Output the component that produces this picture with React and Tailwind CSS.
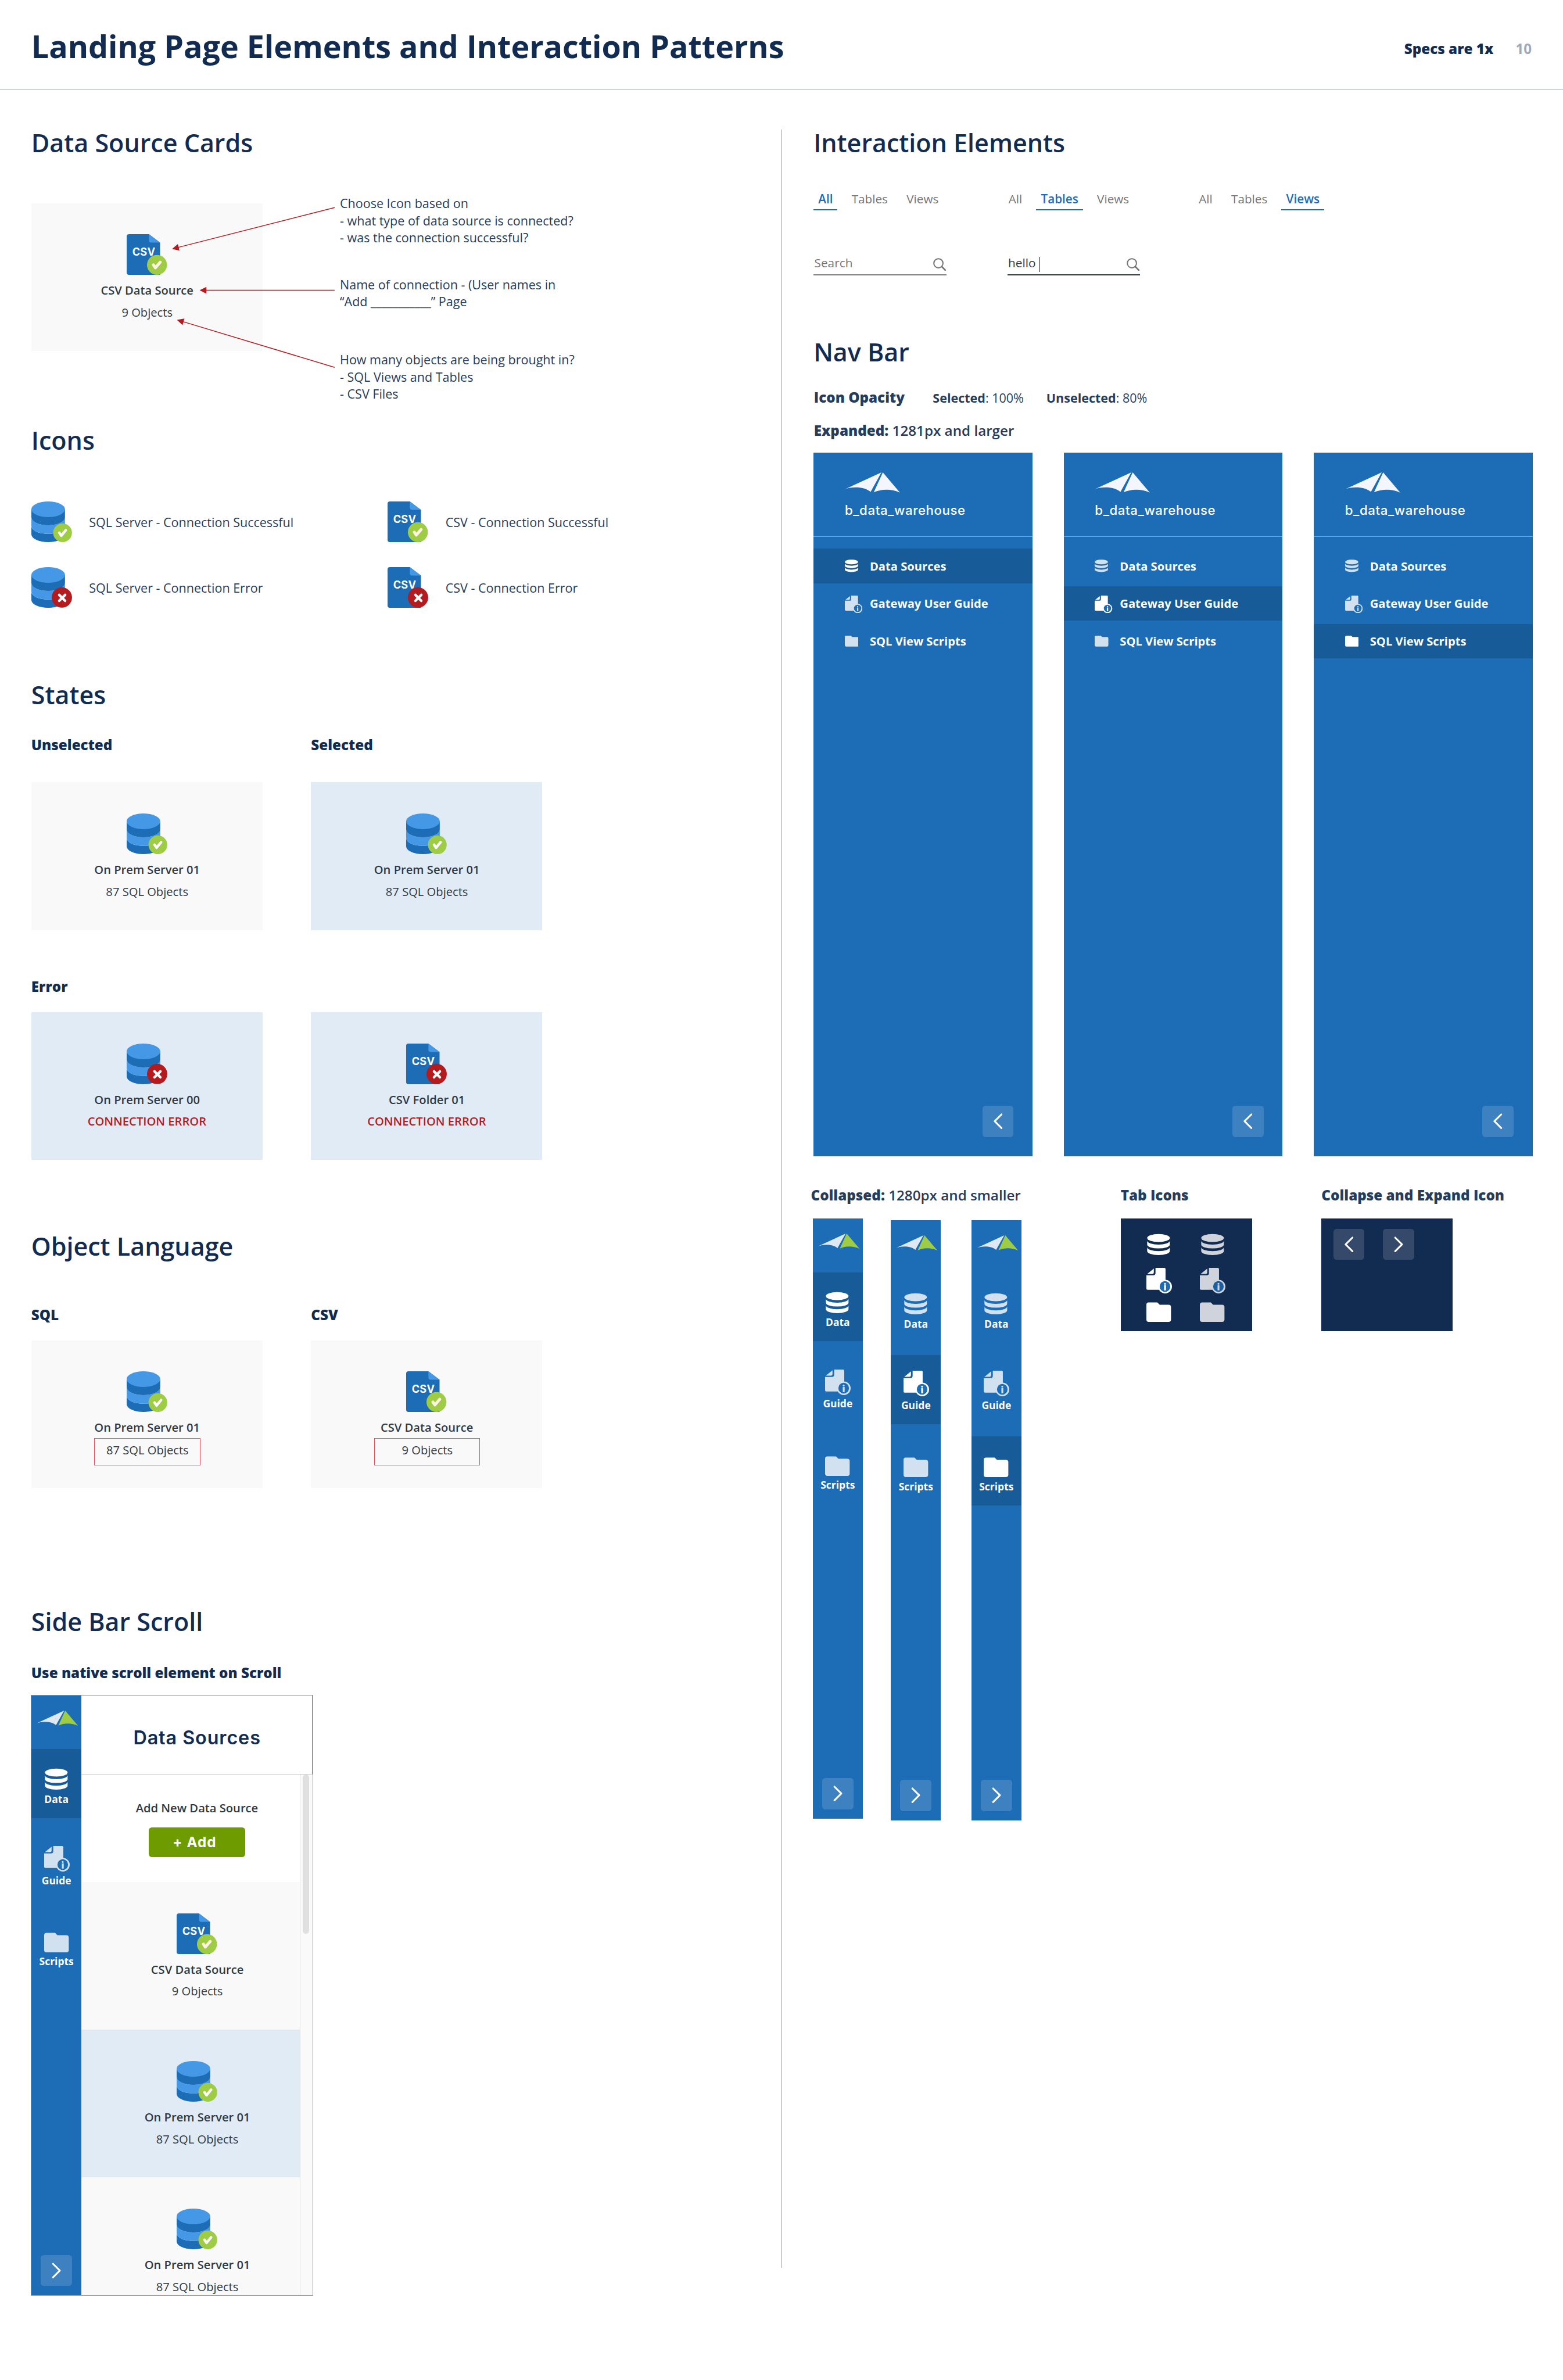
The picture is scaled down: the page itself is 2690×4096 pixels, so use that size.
import React from "react";

/* ---------- status icons ---------- */

function Badge({ error, csv }) {
  if (error) {
    return (
      <g>
        <circle cx="78" cy="77.8" r="26" fill="#b41b1f" />
        <path d="M71.2 71.2 L86.4 86.4 M86.4 71.2 L71.2 86.4" stroke="#fff" strokeWidth="6.4" strokeLinecap="round" />
      </g>
    );
  }
  if (csv) {
    return (
      <g>
        <circle cx="77.6" cy="78.6" r="25.6" fill="#9ecd45" />
        <path d="M68.5 78.5 L73.5 86 L86 71.5" fill="none" stroke="#fff3e4" strokeWidth="7.4" strokeLinecap="round" strokeLinejoin="round" />
      </g>
    );
  }
  return (
    <g>
      <circle cx="79.8" cy="80.2" r="24" fill="#9ecd45" />
      <path d="M71.3 80 L76.6 87.6 L88.2 73.4" fill="none" stroke="#fff" strokeWidth="6.6" strokeLinecap="round" strokeLinejoin="round" />
    </g>
  );
}

function ServerIcon({ error }) {
  return (
    <svg className="h-[105px] w-[104px] shrink-0" viewBox="0 0 104 105">
      <path d="M0 63 A43 20 0 0 0 86 63 V84 A43 20 0 0 1 0 84 Z" fill="#1c6cb6" />
      <path d="M0 41 A43 20 0 0 0 86 41 V63 A43 20 0 0 1 0 63 Z" fill="#4598e6" />
      <path d="M0 20 H86 V41 A43 20 0 0 1 0 41 Z" fill="#1c6cb6" />
      <ellipse cx="43" cy="20" rx="43" ry="20" fill="#4598e6" />
      <Badge error={error} />
    </svg>
  );
}

function CsvIcon({ error }) {
  return (
    <svg className="h-[105px] w-[104px] shrink-0" viewBox="0 0 104 105">
      <path d="M6 0 H57 L85.5 21.5 V104 H6 A6 6 0 0 1 0 98 V6 A6 6 0 0 1 6 0 Z" fill="#1c6cb6" />
      <path d="M57 0 L85.5 21.5 H63 A6 6 0 0 1 57 15.5 Z" fill="#4598e6" />
      <text x="43.8" y="54.8" textAnchor="middle" fill="#fff" className="font-['Inter',sans-serif] text-[27px] font-bold tracking-[0.3px]">
        CSV
      </text>
      <Badge error={error} csv />
    </svg>
  );
}

/* ---------- navigation icons ---------- */

function DbGlyph() {
  return (
    <g fill="#fff">
      <ellipse cx="29" cy="10.2" rx="29" ry="10.2" />
      <path d="M0 17 A29 10 0 0 0 58 17 V27 A29 10 0 0 1 0 27 Z" />
      <path d="M0 34 A29 10 0 0 0 58 34 V44 A29 10 0 0 1 0 44 Z" />
    </g>
  );
}

function GuideGlyph() {
  return (
    <g fill="#fff">
      <path d="M23.3 0 H46 A3 3 0 0 1 49 3 V56 H3 A3 3 0 0 1 0 53 V19 H17.8 A5.5 5.5 0 0 0 23.3 13.5 Z" />
      <path d="M19 2 V12 A3.5 3.5 0 0 1 15.5 15.6 H2 Z" />
      <circle cx="48" cy="48" r="17.4" />
      <circle cx="47.6" cy="47.6" r="13.6" fill="#1c6cb6" />
      <circle cx="47.6" cy="40.8" r="2.4" />
      <rect x="45.3" y="44.4" width="4.8" height="13.3" />
    </g>
  );
}

function FolderGlyph() {
  return (
    <path
      d="M6 0 H28 L34 6 H57 A6 6 0 0 1 63 12 V44 A6 6 0 0 1 57 50 H6 A6 6 0 0 1 0 44 V6 A6 6 0 0 1 6 0 Z"
      fill="#fff"
    />
  );
}

function TabIcon({ kind, dim, className = "" }) {
  return (
    <svg className={`h-[66px] w-[66px] shrink-0 ${dim ? "opacity-80" : ""} ${className}`} viewBox="0 0 66 66">
      {kind === "data" && <g transform="translate(2 10)"><DbGlyph /></g>}
      {kind === "guide" && <GuideGlyph />}
      {kind === "scripts" && <g transform="translate(0 14)"><FolderGlyph /></g>}
    </svg>
  );
}

function MenuIcon({ kind, dim }) {
  const fade = dim ? "opacity-80" : "";
  return (
    <span className="flex h-[88px] w-[64px] shrink-0 items-center">
      {kind === "data" && <svg className={`h-[32px] w-[34px] ${fade}`} viewBox="0 0 58 54"><DbGlyph /></svg>}
      {kind === "guide" && <svg className={`mt-[4px] h-[45px] w-[45px] ${fade}`} viewBox="0 0 65.4 65.4"><GuideGlyph /></svg>}
      {kind === "scripts" && <svg className={`h-[28px] w-[35px] ${fade}`} viewBox="0 0 63 50"><FolderGlyph /></svg>}
    </span>
  );
}

function Logo({ className, left, right }) {
  return (
    <svg className={className} viewBox="0 0 141 52">
      <path d="M93.7 0 L0 43 C18 36.5 48 35 66 49.7 Z" fill={left} />
      <path d="M97.3 0 L141 51.7 C120 42 95 41.5 74 51 Z" fill={right} />
    </svg>
  );
}

function ArrowButton({ dir }) {
  return (
    <div className="h-[80px] w-[80px] shrink-0 rounded-[8px] bg-white/15">
      <svg className="h-[80px] w-[80px]" viewBox="0 0 80 80" fill="none" stroke="#fff" strokeWidth="4.6" strokeLinecap="round" strokeLinejoin="round">
        <path d={dir === "left" ? "M48.5 22.3 L31 39.7 L48.5 57" : "M31.5 22.3 L49 39.7 L31.5 57"} />
      </svg>
    </div>
  );
}

/* ---------- text ---------- */

const H2 = ({ children, className = "" }) => (
  <h2 className={`-mb-[1px] pt-[1px] text-[64px] leading-[64px] font-semibold whitespace-nowrap text-[#122b50] ${className}`}>{children}</h2>
);

const H3 = ({ children, className = "" }) => (
  <h3 className={`-mb-[2px] pt-[2px] text-[36px] leading-[36px] font-extrabold whitespace-nowrap text-[#122b50] ${className}`}>{children}</h3>
);

/* ---------- cards ---------- */

function Card({ icon = "server", title, sub, error, selected, boxed }) {
  return (
    <div className={`flex h-[378px] w-[592px] shrink-0 flex-col items-center pt-[80px] ${selected ? "bg-[#e0ebf5]" : "bg-[#f9f9f9]"}`}>
      {icon === "server" ? <ServerIcon error={error} /> : <CsvIcon error={error} />}
      <p className="mt-[11px] pl-[1px] text-[30px] leading-[56px] font-semibold text-[#2f3943]">{title}</p>
      {error ? (
        <p className="text-[30px] leading-[56px] font-semibold text-[#b41b1f]">{sub}</p>
      ) : (
        <p
          className={`pl-[1px] text-center text-[30px] text-[#2f3943] ${
            boxed ? "-mt-[2px] ml-[2px] h-[70px] w-[272px] border-2 border-[#e0555c] leading-[57px]" : "leading-[56px]"
          }`}
        >
          {sub}
        </p>
      )}
    </div>
  );
}

/* ---------- navigation ---------- */

const MENU = [
  { kind: "data", long: "Data Sources", short: "Data" },
  { kind: "guide", long: "Gateway User Guide", short: "Guide" },
  { kind: "scripts", long: "SQL View Scripts", short: "Scripts" },
];

function ExpandedNav({ active }) {
  return (
    <nav className="flex h-[1800px] w-[560px] shrink-0 flex-col bg-[#1c6cb6] text-white">
      <div className="h-[215px] border-b-2 border-[#7ba8d4] pt-[50px] pl-[80px]">
        <Logo className="h-[52px] w-[141px]" left="#f3f6fc" right="#f3f6fc" />
        <p className="mt-[24px] font-['Inter',sans-serif] text-[33px] leading-[44px] font-medium tracking-[0.9px]">b_data_warehouse</p>
      </div>
      <ul className="mt-[31px] flex flex-col gap-[8px]">
        {MENU.map((m) => (
          <li key={m.kind} className={`flex h-[88px] items-center pl-[80px] ${m.kind === active ? "bg-[#185b99]" : ""}`}>
            <MenuIcon kind={m.kind} dim={m.kind !== active} />
            <span className="text-[30px] leading-[40px] font-bold whitespace-nowrap">{m.long}</span>
          </li>
        ))}
      </ul>
      <div className="mt-auto mr-[48px] mb-[48px] self-end">
        <ArrowButton dir="left" />
      </div>
    </nav>
  );
}

function CollapsedNav({ active, className = "" }) {
  return (
    <nav className={`flex h-[1536px] w-[128px] shrink-0 flex-col bg-[#1c6cb6] text-white ${className}`}>
      <div className="h-[138px] pt-[39px] pl-[13px]">
        <Logo className="h-[39px] w-[106px]" left="#dde8f3" right="#9ecd45" />
      </div>
      <ul className="flex flex-col gap-[32px]">
        {MENU.map((m) => (
          <li key={m.kind} className={`flex h-[176px] flex-col pt-[40px] ${m.kind === active ? "bg-[#185b99]" : ""}`}>
            <TabIcon kind={m.kind} dim={m.kind !== active} className="ml-[32px]" />
            <span className="mt-[9px] text-center text-[26px] leading-[26px] font-bold">{m.short}</span>
          </li>
        ))}
      </ul>
      <div className="mt-auto mb-[24px] self-center">
        <ArrowButton dir="right" />
      </div>
    </nav>
  );
}

/* ---------- tabs and search ---------- */

function Tabs({ active }) {
  return (
    <div className="flex w-[487px] shrink-0 gap-[24px] text-[30.8px] leading-[42px]">
      {["All", "Tables", "Views"].map((t) => (
        <span
          key={t}
          className={`h-[50px] border-b-4 px-[12px] ${
            t === active ? "border-[#1c6cb6] font-semibold text-[#1c6cb6]" : "border-transparent text-[#757575]"
          }`}
        >
          {t}
        </span>
      ))}
    </div>
  );
}

function SearchField({ value }) {
  return (
    <div
      className={`flex h-[56px] w-[340px] shrink-0 border-b-4 pl-[2px] text-[31px] leading-[50px] ${
        value ? "border-[#2f3943] text-[#2f3943]" : "border-[#808080] text-[#757575]"
      }`}
    >
      <span>{value || "Search"}</span>
      {value && <span className="mt-[9px] ml-[8px] h-[38px] w-[2px] bg-black" />}
      <svg className="mt-[11px] mr-[1px] ml-auto h-[33px] w-[33px]" viewBox="0 0 33 33" fill="none" stroke="#757575">
        <circle cx="13.5" cy="13.5" r="11.7" strokeWidth="3" />
        <path d="M22 22 L31 31" strokeWidth="4" strokeLinecap="round" />
      </svg>
    </div>
  );
}

/* ---------- annotation arrows ---------- */

const ARROWS = [
  { from: [776, 33], tip: [360, 139] },
  { from: [776, 244.5], tip: [430.5, 244.7] },
  { from: [776, 442], tip: [372.5, 320.3] },
];

function Arrows() {
  return (
    <svg className="absolute top-0 left-0 h-[532px] w-[800px]" viewBox="0 0 800 532">
      {ARROWS.map(({ from, tip }, i) => {
        const angle = (Math.atan2(from[1] - tip[1], from[0] - tip[0]) * 180) / Math.PI;
        const length = Math.hypot(from[0] - tip[0], from[1] - tip[1]);
        return (
          <g key={i} transform={`translate(${tip[0]} ${tip[1]}) rotate(${angle})`} fill="#b41b1f">
            <rect x="14" y="-1.1" width={length - 14} height="2.2" />
            <path d="M0 0 L17.5 -8.7 V8.7 Z" />
          </g>
        );
      })}
    </svg>
  );
}

/* ---------- columns ---------- */

function LeftColumn() {
  return (
    <div className="flex w-[1920px] shrink-0 flex-col">
      <H2>Data Source Cards</H2>
      <div className="relative mt-[102px] flex h-[532px]">
        <div className="pt-[22px]">
          <Card icon="csv" title="CSV Data Source" sub="9 Objects" />
        </div>
        <div className="ml-[198px] text-[32px] leading-[44px] whitespace-pre text-[#253c5c]">
          <p>{"Choose Icon based on\n- what type of data source is connected?\n- was the connection successful?"}</p>
          <p className="mt-[76px]">{"Name of connection - (User names in\n“Add ___________” Page"}</p>
          <p className="mt-[104px]">{"How many objects are being brought in?\n- SQL Views and Tables\n- CSV Files"}</p>
        </div>
        <Arrows />
      </div>

      <H2 className="mt-[63px]">Icons</H2>
      <div className="mt-[127px] grid grid-cols-[912px_912px] gap-y-[63px] text-[32px] leading-[44px] text-[#253c5c]">
        <div className="flex items-center gap-[44px]"><ServerIcon />SQL Server - Connection Successful</div>
        <div className="flex items-center gap-[44px]"><CsvIcon />CSV - Connection Successful</div>
        <div className="flex items-center gap-[44px]"><ServerIcon error />SQL Server - Connection Error</div>
        <div className="flex items-center gap-[44px]"><CsvIcon error />CSV - Connection Error</div>
      </div>

      <H2 className="mt-[188px]">States</H2>
      <div className="mt-[78px] flex h-[36px] gap-[124px]">
        <H3 className="w-[592px]">Unselected</H3>
        <H3>Selected</H3>
      </div>
      <div className="mt-[79px] flex gap-[124px]">
        <Card title="On Prem Server 01" sub="87 SQL Objects" />
        <Card title="On Prem Server 01" sub="87 SQL Objects" selected />
      </div>
      <H3 className="mt-[125px]">Error</H3>
      <div className="mt-[49px] flex gap-[124px]">
        <Card title="On Prem Server 00" sub="CONNECTION ERROR" error selected />
        <Card icon="csv" title="CSV Folder 01" sub="CONNECTION ERROR" error selected />
      </div>

      <H2 className="mt-[188px]">Object Language</H2>
      <div className="mt-[126px] flex h-[36px] gap-[124px]">
        <H3 className="w-[592px]">SQL</H3>
        <H3>CSV</H3>
      </div>
      <div className="mt-[48px] flex gap-[124px]">
        <Card title="On Prem Server 01" sub="87 SQL Objects" boxed />
        <Card icon="csv" title="CSV Data Source" sub="9 Objects" boxed />
      </div>

      <H2 className="mt-[309px]">Side Bar Scroll</H2>
      <H3 className="mt-[81px]">Use native scroll element on Scroll</H3>
      <ScrollDemo />
    </div>
  );
}

function ScrollDemo() {
  return (
    <div className="mt-[39px] -ml-[1px] flex h-[1538px] w-[722px] border border-t-2 border-[#999]">
      <CollapsedNav active="data" />
      <div className="relative flex h-[1535px] w-[592px] flex-col overflow-hidden">
        <div className="h-[203px] shrink-0 border-r-2 border-b-2 border-r-[#999] border-b-[#ccc] pt-[77px] pl-[2px] text-center font-['Inter',sans-serif] text-[48px] leading-[64px] font-semibold tracking-[1.4px] text-[#122b50]">
          Data Sources
        </div>
        <div className="flex h-[275px] shrink-0 flex-col items-center pt-[65px]">
          <p className="text-[30px] leading-[40px] font-semibold text-[#2f3943]">Add New Data Source</p>
          <div className="mt-[30px] flex h-[76px] w-[248px] items-center justify-center rounded-[8px] bg-[#6e9b00] pr-[12px] font-['Inter',sans-serif] text-[36px] leading-[44px] font-bold tracking-[1.5px] text-white">
            + Add
          </div>
        </div>
        <Card icon="csv" title="CSV Data Source" sub="9 Objects" />
        <Card title="On Prem Server 01" sub="87 SQL Objects" selected />
        <Card title="On Prem Server 01" sub="87 SQL Objects" />
        <div className="absolute top-[203px] right-0 bottom-0 w-[32px] border-l-2 border-[#e0e0e0] bg-[#fafafa]">
          <div className="ml-[6px] h-[408px] w-[16px] rounded-full bg-[#e0e0e0]" />
        </div>
      </div>
    </div>
  );
}

function RightColumn() {
  return (
    <div className="flex flex-col pl-[80px]">
      <H2>Interaction Elements</H2>
      <div className="mt-[92px] flex">
        <Tabs active="All" />
        <Tabs active="Tables" />
        <Tabs active="Views" />
      </div>
      <div className="mt-[111px] flex gap-[156px]">
        <SearchField />
        <SearchField value="hello" />
      </div>

      <H2 className="mt-[162px]">Nav Bar</H2>
      <div className="mt-[68px] flex items-baseline pl-[1px] text-[32px] leading-[36px] whitespace-nowrap text-[#253c5c]">
        <span className="text-[36px] font-extrabold">Icon Opacity</span>
        <span className="ml-[72px]"><b>Selected</b>: 100%</span>
        <span className="ml-[58px]"><b>Unselected</b>: 80%</span>
      </div>
      <p className="mt-[47px] pl-[1px] text-[36px] leading-[36px] font-semibold text-[#253c5c]">
        <span className="font-extrabold">Expanded:</span> 1281px and larger
      </p>
      <div className="mt-[39px] flex gap-[80px]">
        <ExpandedNav active="data" />
        <ExpandedNav active="guide" />
        <ExpandedNav active="scripts" />
      </div>

      <div className="mt-[83px] -ml-[7px] flex text-[36px] leading-[36px] whitespace-nowrap text-[#253c5c]">
        <p className="w-[793px] font-semibold"><span className="font-extrabold">Collapsed:</span> 1280px and smaller</p>
        <p className="w-[514px] font-extrabold">Tab Icons</p>
        <p className="font-extrabold">Collapse and Expand Icon</p>
      </div>
      <div className="mt-[41px] -ml-[2px] flex items-start">
        <CollapsedNav active="data" />
        <CollapsedNav active="guide" className="mt-[4px] ml-[72px]" />
        <CollapsedNav active="scripts" className="mt-[4px] ml-[78px]" />
        <div className="ml-[254px] flex h-[288px] w-[336px] bg-[#122b50] pl-[66px]">
          <div className="flex w-[136px] flex-col pt-[30px]">
            <TabIcon kind="data" />
            <TabIcon kind="guide" className="mt-[30px]" />
            <TabIcon kind="scripts" className="mt-[8px]" />
          </div>
          <div className="flex flex-col pt-[30px]">
            <TabIcon kind="data" dim className="ml-[2px]" />
            <TabIcon kind="guide" dim className="mt-[30px]" />
            <TabIcon kind="scripts" dim className="mt-[8px]" />
          </div>
        </div>
        <div className="ml-[178px] flex h-[288px] w-[336px] gap-[47px] bg-[#122b50] pt-[26px] pl-[30px]">
          <ArrowButton dir="left" />
          <ArrowButton dir="right" />
        </div>
      </div>
    </div>
  );
}

export default function App() {
  return (
    <div className="h-[6090px] w-[4000px] overflow-hidden bg-white font-['Open_Sans',sans-serif] [zoom:0.6725]">
      <header className="flex h-[230px] items-start justify-between border-b-4 border-[#d0d4e4] px-[80px]">
        <h1 className="pt-[79px] text-[80px] leading-[80px] font-bold whitespace-nowrap text-[#122b50]">
          Landing Page Elements and Interaction Patterns
        </h1>
        <div className="flex gap-[57px] pt-[106px] text-[36px] leading-[40px] font-extrabold text-[#122b50]">
          <span>Specs are 1x</span>
          <span className="font-bold text-[#a0a8b8]">10</span>
        </div>
      </header>
      <main className="flex pt-[102px] pl-[80px]">
        <LeftColumn />
        <div className="h-[5471px] w-[2px] shrink-0 bg-[#999]" />
        <RightColumn />
      </main>
    </div>
  );
}
